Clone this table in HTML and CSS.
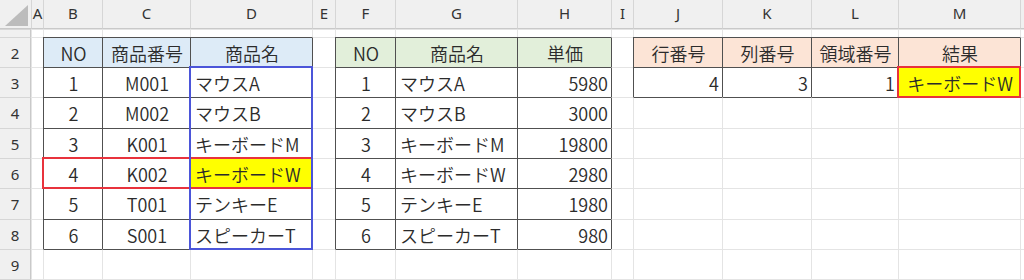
FILE: index.html
```html
<!DOCTYPE html>
<html lang="ja">
<head>
<meta charset="utf-8">
<title>INDEX</title>
<link rel="stylesheet" href="styles.css">
</head>
<body>
<div class="wrap">
<div class="sheet">
  <!-- column header row -->
  <div class="corner"><svg width="31" height="29" viewBox="0 0 31 29"><polygon points="28,5 28,26 5,26" fill="#bcbcbc"/></svg></div>
  <div class="ch">A</div><div class="ch">B</div><div class="ch">C</div><div class="ch">D</div><div class="ch">E</div><div class="ch">F</div><div class="ch">G</div><div class="ch">H</div><div class="ch">I</div><div class="ch">J</div><div class="ch">K</div><div class="ch">L</div><div class="ch">M</div><div class="ch"></div>

  <!-- row 1 -->
  <div class="rh"></div>
  <div class="c"></div><div class="c"></div><div class="c"></div><div class="c"></div><div class="c"></div><div class="c"></div><div class="c"></div><div class="c"></div><div class="c"></div><div class="c"></div><div class="c"></div><div class="c"></div><div class="c"></div><div class="c"></div>

  <!-- row 2 -->
  <div class="rh">2</div>
  <div class="c"></div>
  <div class="c d e h1 ctr">NO</div><div class="c d e h1 ctr">商品番号</div><div class="c d e h1 ctr">商品名</div>
  <div class="c d"></div>
  <div class="c d e h2 ctr">NO</div><div class="c d e h2 ctr">商品名</div><div class="c d e h2 ctr">単価</div>
  <div class="c d"></div>
  <div class="c d e h3 ctr">行番号</div><div class="c d e h3 ctr">列番号</div><div class="c d e h3 ctr">領域番号</div><div class="c d e h3 ctr">結果</div>
  <div class="c d"></div>

  <!-- row 3 -->
  <div class="rh">3</div>
  <div class="c"></div>
  <div class="c d e ctr">1</div><div class="c d e ctr">M001</div><div class="c d e">マウスA</div>
  <div class="c d"></div>
  <div class="c d e ctr">1</div><div class="c d e">マウスA</div><div class="c d e r">5980</div>
  <div class="c d"></div>
  <div class="c d e r">4</div><div class="c d e r">3</div><div class="c d e r">1</div><div class="c d e y ctr">キーボードW</div>
  <div class="c d"></div>

  <!-- row 4 -->
  <div class="rh">4</div>
  <div class="c"></div>
  <div class="c d e ctr">2</div><div class="c d e ctr">M002</div><div class="c d e">マウスB</div>
  <div class="c d"></div>
  <div class="c d e ctr">2</div><div class="c d e">マウスB</div><div class="c d e r">3000</div>
  <div class="c d"></div>
  <div class="c e"></div><div class="c e"></div><div class="c e"></div><div class="c e"></div>
  <div class="c"></div>

  <!-- row 5 -->
  <div class="rh">5</div>
  <div class="c"></div>
  <div class="c d e ctr">3</div><div class="c d e ctr">K001</div><div class="c d e">キーボードM</div>
  <div class="c d"></div>
  <div class="c d e ctr">3</div><div class="c d e">キーボードM</div><div class="c d e r">19800</div>
  <div class="c d"></div>
  <div class="c"></div><div class="c"></div><div class="c"></div><div class="c"></div>
  <div class="c"></div>

  <!-- row 6 -->
  <div class="rh">6</div>
  <div class="c"></div>
  <div class="c d e ctr">4</div><div class="c d e ctr">K002</div><div class="c d e y">キーボードW</div>
  <div class="c d"></div>
  <div class="c d e ctr">4</div><div class="c d e">キーボードW</div><div class="c d e r">2980</div>
  <div class="c d"></div>
  <div class="c"></div><div class="c"></div><div class="c"></div><div class="c"></div>
  <div class="c"></div>

  <!-- row 7 -->
  <div class="rh">7</div>
  <div class="c"></div>
  <div class="c d e ctr">5</div><div class="c d e ctr">T001</div><div class="c d e">テンキーE</div>
  <div class="c d"></div>
  <div class="c d e ctr">5</div><div class="c d e">テンキーE</div><div class="c d e r">1980</div>
  <div class="c d"></div>
  <div class="c"></div><div class="c"></div><div class="c"></div><div class="c"></div>
  <div class="c"></div>

  <!-- row 8 -->
  <div class="rh">8</div>
  <div class="c"></div>
  <div class="c d e ctr">6</div><div class="c d e ctr">S001</div><div class="c d e">スピーカーT</div>
  <div class="c d"></div>
  <div class="c d e ctr">6</div><div class="c d e">スピーカーT</div><div class="c d e r">980</div>
  <div class="c d"></div>
  <div class="c"></div><div class="c"></div><div class="c"></div><div class="c"></div>
  <div class="c"></div>

  <!-- row 9 -->
  <div class="rh">9</div>
  <div class="c"></div>
  <div class="c e"></div><div class="c e"></div><div class="c e"></div>
  <div class="c"></div>
  <div class="c e"></div><div class="c e"></div><div class="c e"></div>
  <div class="c"></div>
  <div class="c"></div><div class="c"></div><div class="c"></div><div class="c"></div>
  <div class="c"></div>

  <!-- row 10 (partially visible) -->
  <div class="rh"></div>
  <div class="c"></div><div class="c"></div><div class="c"></div><div class="c"></div><div class="c"></div><div class="c"></div><div class="c"></div><div class="c"></div><div class="c"></div><div class="c"></div><div class="c"></div><div class="c"></div><div class="c"></div><div class="c"></div>
</div>

<!-- selection outlines drawn over the cells, on the same grid tracks -->
<div class="sheet marks">
  <div class="box red-row"></div>
  <div class="box blue-col"></div>
  <div class="box red-result"></div>
</div>
</div>
</body>
</html>
```

FILE: styles.css
```css
html, body {
  margin: 0;
  padding: 0;
  background: #ffffff;
  overflow: hidden;
}

.wrap {
  display: grid;
  width: 1024px;
  height: 280px;
  overflow: hidden;
}

.sheet {
  grid-area: 1 / 1;
  display: grid;
  width: 1024px;
  height: 280px;
  grid-template-columns: 31px 12px 59px 88px 122px 23px 60px 122px 94px 22px 89px 89px 87px 122px 1fr;
  grid-template-rows: 29px 8px 30px 30px 31px 30px 30px 31px 30px 30px 1fr;
  font-family: "Noto Sans CJK JP", "Noto Sans", sans-serif;
  font-size: 18px;
  font-weight: 350;
  color: #2b2b2b;
}

.marks {
  pointer-events: none;
}

.corner {
  background: #f0f0f0;
  border-bottom: 1px solid #c9c9c9;
  box-sizing: border-box;
}
.corner svg { display: block; }

.ch {
  background: #f0f0f0;
  border-left: 1px solid #d6d6d6;
  border-bottom: 1px solid #c9c9c9;
  box-sizing: border-box;
  display: flex;
  align-items: center;
  justify-content: center;
  padding-bottom: 3px;
  font-family: "Noto Sans", "Liberation Sans", sans-serif;
  font-size: 15px;
  font-weight: 400;
  color: #333333;
  min-width: 0;
  overflow: visible;
}

.rh {
  background: #f0f0f0;
  border-top: 1px solid #d6d6d6;
  border-right: 1px solid #c9c9c9;
  box-sizing: border-box;
  display: flex;
  align-items: center;
  justify-content: center;
  font-family: "Noto Sans", "Liberation Sans", sans-serif;
  font-size: 15px;
  font-weight: 400;
  color: #333333;
}

.c {
  box-sizing: border-box;
  border-left: 1px solid #e4e4e4;
  border-top: 1px solid #e4e4e4;
  display: flex;
  align-items: center;
  padding: 0 3px 0 4px;
  white-space: nowrap;
  min-width: 0;
  line-height: 1;
}

.ctr { justify-content: center; }
.r { justify-content: flex-end; }

.d { border-left-color: #505050; }
.e { border-top-color: #505050; }

.h1 { background: #ddebf7; }
.h2 { background: #e2efda; }
.h3 { background: #fce4d6; }
.y { background: #ffff00; }

.box {
  box-sizing: border-box;
  margin: -1px;
  border: 2px solid transparent;
}
.red-row {
  grid-column: 3 / 6;
  grid-row: 7 / 8;
  border-color: #e8323c;
}
.blue-col {
  grid-column: 5 / 6;
  grid-row: 4 / 10;
  border-color: #4b55d9;
}
.red-result {
  grid-column: 14 / 15;
  grid-row: 4 / 5;
  border-color: #e8323c;
}
```
